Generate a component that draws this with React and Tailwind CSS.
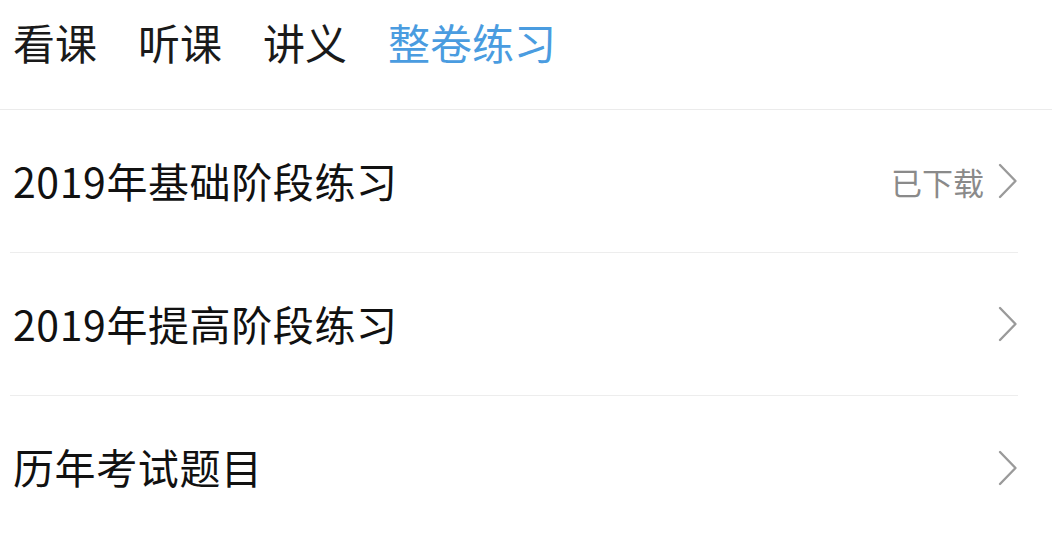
import React from 'react';

const tabs = ['看课', '听课', '讲义', '整卷练习'];

const rows = [
  { title: '2019年基础阶段练习', status: '已下载' },
  { title: '2019年提高阶段练习' },
  { title: '历年考试题目' },
];

const Chevron = () => (
  <svg width="20" height="36" viewBox="0 0 20 36" fill="none" className="shrink-0">
    <polyline points="2,2 17.5,18 2,34" stroke="#9a9a9a" strokeWidth="2.4" strokeLinecap="round" strokeLinejoin="round" />
  </svg>
);

export default function App() {
  const active = 3;

  return (
    <div
      className="w-[1052px] h-[540px] bg-white overflow-hidden"
      style={{ fontFamily: '"Noto Sans CJK SC", "Noto Sans", sans-serif' }}
    >
      <div className="h-[110px] flex items-center gap-[41px] px-[13px] pb-[26px] border-b border-[#ebebeb]">
        {tabs.map((tab, i) => (
          <span
            key={tab}
            className={`text-[42px] leading-none ${i === active ? 'text-[#4a9ce0]' : 'text-[#1a1a1a]'}`}
          >
            {tab}
          </span>
        ))}
      </div>

      <div className="pl-[10px] pr-[34px]">
        {rows.map((row, i) => (
          <div
            key={row.title}
            className={`h-[143px] flex items-center justify-between ${i < rows.length - 1 ? 'border-b border-[#ededed]' : ''}`}
          >
            <span className="pl-[3px] pb-[2px] text-[41px] leading-none tracking-[0.6px] text-[#111]">{row.title}</span>
            <div className="flex items-center gap-[14px]">
              {row.status && <span className="text-[31px] leading-none text-[#8a8a8a]">{row.status}</span>}
              <Chevron />
            </div>
          </div>
        ))}
      </div>
    </div>
  );
}
